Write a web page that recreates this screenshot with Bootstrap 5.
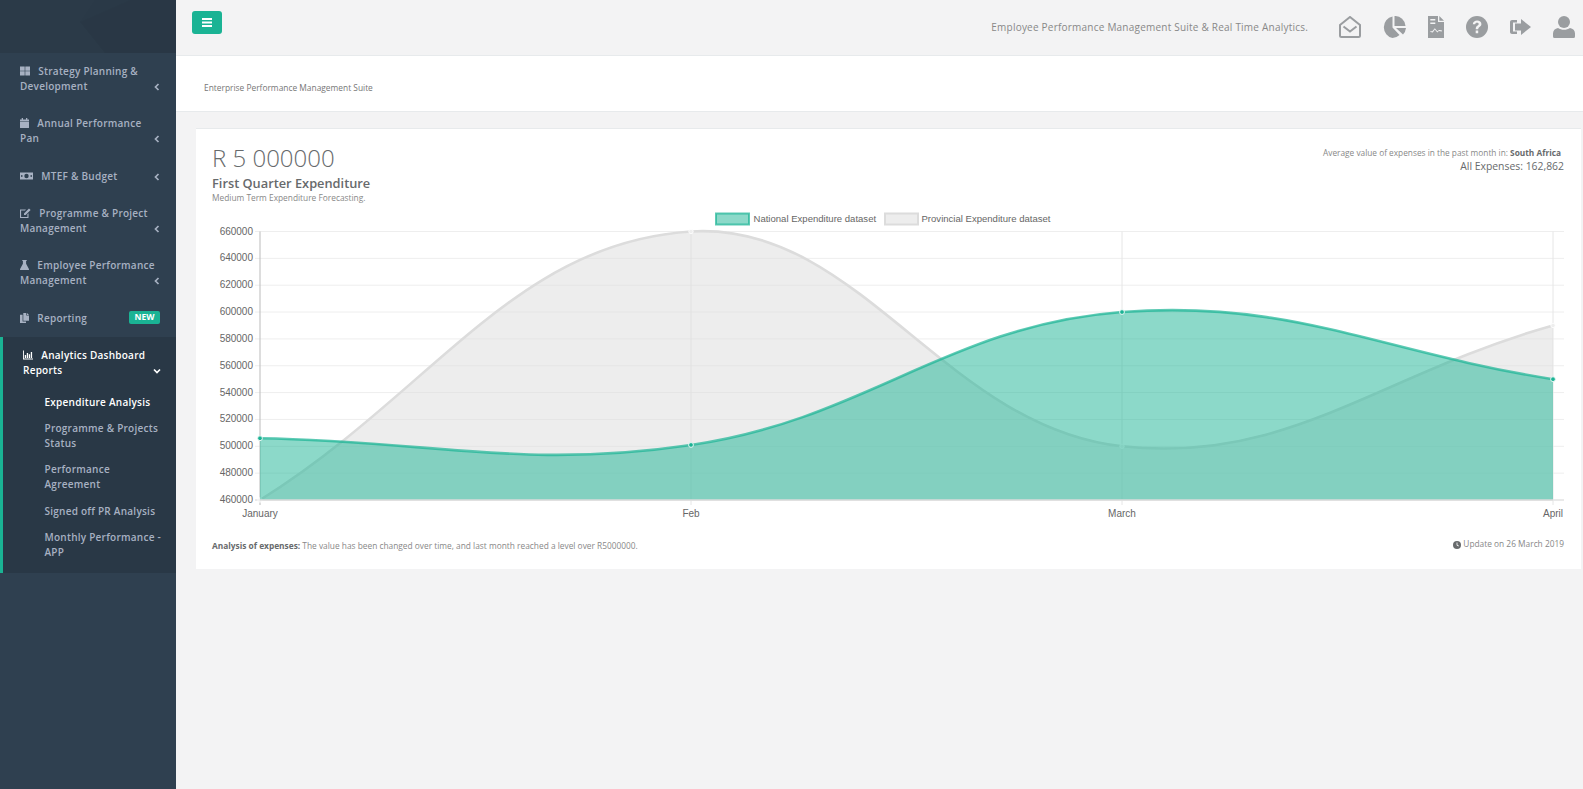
<!DOCTYPE html>
<html lang="en">
<head>
<meta charset="utf-8">
<title>Expenditure Analysis</title>
<link href="https://cdn.jsdelivr.net/npm/bootstrap@5.3.0/dist/css/bootstrap.min.css" rel="stylesheet">
<style>
html,body{height:100%;}
body{font-family:"Open Sans",sans-serif;background:#f3f3f4;color:#676a6c;font-size:13px;overflow:hidden;}
.shell{min-height:789px;}
.side{width:176px;flex:0 0 176px;background:#2f4050;min-height:789px;}
.side-head{height:53px;background:#2a3947;overflow:hidden;}
.side-head svg{display:block;}
.side-menu{list-style:none;margin:0;padding:0;}
.side-link{display:block;position:relative;padding:11px 20px 11px 20px;font-size:10px;font-weight:600;line-height:15px;color:#a7b1c2;text-decoration:none;letter-spacing:.25px;}
.side-link svg.lead-ico{vertical-align:-1px;margin-right:5.5px;fill:#a7b1c2;}
.side-arrow{position:absolute;right:15px;bottom:14.5px;width:8px;height:8px;}
.nudge{margin-top:1px;}
.side-active{background:#293846;border-left:3px solid #1ab394;}
.side-active>.side-link{color:#fff;padding-bottom:12px;}
.side-active>.side-link svg.lead-ico{fill:#fff;}
.side-active>.side-link .side-arrow{bottom:15.5px;}
.sub-menu{list-style:none;margin:0;padding:0 0 6.5px 0;}
.sub-link{display:block;padding:5px 12px 6px 41.5px;font-size:10px;font-weight:600;line-height:15px;color:#a7b1c2;text-decoration:none;letter-spacing:.25px;}
.sub-now{color:#fff;}
.tag-new{position:absolute;right:16px;top:11px;width:31px;height:13px;background:#1ab394;color:#fff;font-size:8.5px;font-weight:700;line-height:12px;text-align:center;border-radius:2px;letter-spacing:0;}
.main-col{min-width:0;}
.top-strip{height:56px;border-bottom:1px solid #e7eaec;padding:11px 8px 0 16px;}
.burger{width:30px;height:23px;background:#1ab394;border:0;border-radius:3px;padding:0;display:flex;align-items:center;justify-content:center;}
.top-msg{font-size:10px;line-height:14px;color:#888;letter-spacing:.22px;margin-right:31px;margin-top:9px;}
.top-icons{gap:22px;margin-top:5px;}
.env-ico{margin-right:-1px;}
.crumb-band{height:56px;background:#fff;border-bottom:1px solid #e7eaec;padding:26px 28px 0 28px;font-size:8.4px;color:#777;line-height:12px;}
.chart-box{margin:16px 2px 0 20px;background:#fff;border-top:1px solid #e7eaec;height:441px;padding:14px 17px 0 16px;position:relative;}
.big-val{font-size:24px;font-weight:300;line-height:30px;color:#676a6c;}
.chart-title{font-size:12.8px;font-weight:600;line-height:18px;margin-top:1px;color:#676a6c;}
.chart-sub{font-size:8.35px;line-height:12px;margin-top:0;color:#888;}
.avg-line{font-size:8.3px;line-height:12px;color:#888;padding-right:3px;margin-top:4px;}
.avg-line b{color:#676a6c;}
.all-line{font-size:10.4px;line-height:14px;color:#676a6c;margin-top:0;}
.plot{position:absolute;left:0;top:0;}
.plot text{font-family:"Liberation Sans",sans-serif;font-size:10px;fill:#666;}
.plot text.legend-txt{font-size:9.55px;}
.foot-row{position:absolute;left:16px;right:17px;top:409px;font-size:8.35px;color:#888;line-height:12px;}
.foot-row b{color:#676a6c;}
.foot-left{padding-top:2px;}
</style>
</head>
<body>
<div class="d-flex shell">
  <nav class="side">
    <div class="side-head"><svg width="176" height="53" viewBox="0 0 176 53"><path d="M0 0h95L80 22 105 53H0z" fill="#fff" opacity=".008"/><path d="M80 22 130 0h46v53h-71z" fill="#000" opacity=".02"/></svg></div>
    <ul class="side-menu">
      <li><a class="side-link" href="#"><svg class="lead-ico" width="10" height="10" viewBox="0 0 10 10"><path d="M0 .5h4.700v4.200H0zM5.300.5H10v4.200H5.300zM0 5.300h4.700v4.200H0zM5.300 5.300H10v4.200H5.300z"/></svg> Strategy Planning &amp; Development<svg class="side-arrow" viewBox="0 0 8 8"><path d="M5.500 1 2.500 4l3 3" fill="none" stroke="#a7b1c2" stroke-width="1.700"/></svg></a></li>
      <li><a class="side-link" href="#"><svg class="lead-ico" width="9" height="10" viewBox="0 0 9 10"><path d="M0 3.600h9v5.900a.5.5 0 0 1-.5.5H.5a.5.5 0 0 1-.5-.5zM0 1.500h1.700V0h1.300v1.500h3V0h1.300v1.500H9v1.500H0z"/></svg> Annual Performance Pan<svg class="side-arrow" viewBox="0 0 8 8"><path d="M5.500 1 2.500 4l3 3" fill="none" stroke="#a7b1c2" stroke-width="1.700"/></svg></a></li>
      <li class="nudge"><a class="side-link" href="#"><svg class="lead-ico" width="13" height="10" viewBox="0 0 13 10"><path fill-rule="evenodd" d="M0 1.500h13v7H0zM6.500 2.800a2.200 2.200 0 1 0 0 4.400 2.200 2.200 0 0 0 0-4.400zM1.200 4v2h1.200V4zM10.600 4v2h1.200V4z"/></svg> MTEF &amp; Budget<svg class="side-arrow" viewBox="0 0 8 8"><path d="M5.500 1 2.500 4l3 3" fill="none" stroke="#a7b1c2" stroke-width="1.700"/></svg></a></li>
      <li><a class="side-link" href="#"><svg class="lead-ico" width="11" height="10" viewBox="0 0 11 10"><path d="M0 1.500h6L5 2.600H1.100v6.300h6.300V6.300L8.500 5.200V10H0zM4 5.500 9 .5l1.600 1.600-5 5H4z"/></svg> Programme &amp; Project Management<svg class="side-arrow" viewBox="0 0 8 8"><path d="M5.500 1 2.500 4l3 3" fill="none" stroke="#a7b1c2" stroke-width="1.700"/></svg></a></li>
      <li><a class="side-link" href="#"><svg class="lead-ico" width="9" height="10" viewBox="0 0 9 10"><path d="M2.300 0h4.400v.9h-.6v2.900l2.800 5.200a.7.7 0 0 1-.6 1H.7a.7.7 0 0 1-.6-1l2.800-5.200V.9h-.6z"/></svg> Employee Performance Management<svg class="side-arrow" viewBox="0 0 8 8"><path d="M5.500 1 2.500 4l3 3" fill="none" stroke="#a7b1c2" stroke-width="1.700"/></svg></a></li>
      <li class="nudge"><a class="side-link" href="#"><svg class="lead-ico" width="9" height="10" viewBox="0 0 9 10"><path d="M3.300 0h3v2.500H9v5.300H3.300zM7 0l2 1.900H7zM0 1.800h2.600v6.700h3.400V10H0z"/></svg> Reporting<span class="tag-new">NEW</span></a></li>
      <li class="side-active">
        <a class="side-link" href="#"><svg class="lead-ico" width="10" height="10" viewBox="0 0 10 10"><path d="M0 .5h.9v8H10v1H0zM1.800 5h1.300v3H1.800zM3.800 3h1.300v5H3.800zM5.800 4.200h1.300V8H5.800zM7.800 2h1.300v6H7.800z"/></svg> Analytics Dashboard Reports<svg class="side-arrow" viewBox="0 0 8 8"><path d="M1 2.500 4 5.500l3-3" fill="none" stroke="#fff" stroke-width="1.700"/></svg></a>
        <ul class="sub-menu">
          <li><a class="sub-link sub-now" href="#">Expenditure Analysis</a></li>
          <li><a class="sub-link" href="#">Programme &amp; Projects Status</a></li>
          <li><a class="sub-link" href="#">Performance Agreement</a></li>
          <li class="nudge"><a class="sub-link" href="#">Signed off PR Analysis</a></li>
          <li><a class="sub-link" href="#">Monthly Performance - APP</a></li>
        </ul>
      </li>
    </ul>
  </nav>
  <div class="flex-grow-1 main-col">
    <header class="top-strip d-flex justify-content-between align-items-start">
      <button class="burger" type="button" aria-label="Menu"><svg width="10" height="9" viewBox="0 0 10 9"><path d="M0 0h10v2H0zM0 3.500h10v2H0zM0 7h10v2H0z" fill="#fff"/></svg></button>
      <div class="d-flex align-items-start">
        <span class="top-msg">Employee Performance Management Suite &amp; Real Time Analytics.</span>
        <div class="d-flex top-icons">
          <svg class="env-ico" width="22" height="22" viewBox="0 0 22 22"><path d="M1 9 11 1l10 8v10.500a1.500 1.500 0 0 1-1.500 1.500h-17A1.500 1.500 0 0 1 1 19.500z" fill="none" stroke="#9a9da0" stroke-width="2"/><path d="M4.500 10.500l6.500 5 6.500-5" fill="none" stroke="#9a9da0" stroke-width="2"/></svg>
          <svg width="24" height="22" viewBox="0 0 24 22" fill="#9a9da0"><path d="M10.500.5v11l7 7.500a10.500 10.500 0 0 1-7 3A11 11 0 0 1 10.500.5z"/><path d="M12.500 0A10.500 10.500 0 0 1 23.500 10H12.500z"/><path d="M14 12h10a11 11 0 0 1-3 6.500z"/></svg>
          <svg width="16" height="22" viewBox="0 0 16 22" fill="#9a9da0"><path fill-rule="evenodd" d="M0 0h10v6h6v16H0zM11.300 0 16 4.700h-4.700zM2.300 3v1.500h5V3zM2.300 6.500V8h5V6.500zM2.300 16l2.500.5 2-3 2.500 3 1.500-1.500 3 .5v-1.200l-2.700-.4-1.800 1.300-2.500-3-2.500 3H2.300z"/></svg>
          <svg width="22" height="22" viewBox="0 0 22 22"><circle cx="11" cy="11" r="11" fill="#9a9da0"/><path d="M6.800 8.200C7 5.800 8.900 4.500 11.100 4.500c2.500 0 4.300 1.400 4.300 3.500 0 2.900-3.200 2.900-3.200 5.200H9.700c0-3.500 3-3.500 3-5.100 0-.9-.7-1.400-1.700-1.400-1.100 0-1.700.7-1.900 1.500zM9.700 14.500h2.500v2.800H9.700z" fill="#f3f3f4"/></svg>
          <svg width="21" height="22" viewBox="0 0 21 22" fill="#9a9da0"><path d="M0 6c0-1.300 1-2 2-2h5v2.500H3v9h4V18H2c-1 0-2-.8-2-2zM11 3l10 8-10 8v-4.500H5v-7h6z"/></svg>
          <svg width="22" height="22" viewBox="0 0 22 22" fill="#9a9da0"><circle cx="11" cy="6" r="6"/><path d="M5 12c1.700 1.200 3.800 1.800 6 1.800s4.300-.6 6-1.800c3 .5 5 2.500 5 5.500v3a1.500 1.500 0 0 1-1.500 1.500h-19A1.500 1.500 0 0 1 0 20.500v-3c0-3 2-5 5-5.500z"/></svg>
        </div>
      </div>
    </header>
    <div class="crumb-band">Enterprise Performance Management Suite</div>
    <section class="chart-box">
      <svg class="plot" id="plot" width="1385" height="441" viewBox="196 129 1385 441" aria-label="Expenditure line chart"></svg>
      <div class="d-flex justify-content-between position-relative">
        <div>
          <div class="big-val">R 5 000000</div>
          <div class="chart-title">First Quarter Expenditure</div>
          <div class="chart-sub">Medium Term Expenditure Forecasting.</div>
        </div>
        <div class="text-end">
          <div class="avg-line">Average value of expenses in the past month in: <b>South Africa</b></div>
          <div class="all-line">All Expenses: 162,862</div>
        </div>
      </div>
      <div class="foot-row d-flex justify-content-between">
        <div class="foot-left"><b>Analysis of expenses:</b> The value has been changed over time, and last month reached a level over R5000000.</div>
        <div><svg width="8" height="8" viewBox="0 0 8 8"><circle cx="4" cy="4" r="4" fill="#676a6c"/><path d="M3.600 1.500h.8v2.300l1.500 1-.5.600L3.600 4.200z" fill="#fff"/></svg> Update on 26 March 2019</div>
      </div>
    </section>
  </div>
</div>
<script>
(function(){
  var svg=document.getElementById('plot'),NS='http://www.w3.org/2000/svg';
  var xs=[260,691,1122,1553],top=231.5,bot=500;
  function Y(v){return bot-(v-460000)/200000*(bot-top);}
  function add(n,a,t){var e=document.createElementNS(NS,n);for(var k in a)e.setAttribute(k,a[k]);if(t)e.textContent=t;svg.appendChild(e);return e;}
  for(var i=0;i<=10;i++){var v=460000+i*20000,y=Y(v);
    add('line',{x1:255,x2:1564,y1:y,y2:y,stroke:i==0?'#d4d4d4':'#eeeeee','stroke-width':1});
    add('text',{x:253,y:y+3,'text-anchor':'end'},String(v));}
  xs.forEach(function(x,i){add('line',{x1:x,x2:x,y1:top,y2:505,stroke:i==0?'#bbb':'#e6e6e6','stroke-width':1});});
  ['January','Feb','March','April'].forEach(function(t,i){add('text',{x:xs[i],y:517,'text-anchor':'middle'},t);});
  function path(data){
    var p=data.map(function(v,i){return [xs[i],Y(v)];}),t=0.4,c=[];
    p.forEach(function(c0,i){
      var a=p[i-1]||c0,b=p[i+1]||c0;
      var d1=Math.hypot(c0[0]-a[0],c0[1]-a[1]),d2=Math.hypot(b[0]-c0[0],b[1]-c0[1]);
      var s=d1+d2||1,fa=t*d1/s,fb=t*d2/s;
      c.push([[c0[0]-fa*(b[0]-a[0]),c0[1]-fa*(b[1]-a[1])],[c0[0]+fb*(b[0]-a[0]),c0[1]+fb*(b[1]-a[1])]]);
    });
    var d='M'+p[0];
    for(var i=1;i<p.length;i++)d+=' C'+c[i-1][1]+' '+c[i][0]+' '+p[i];
    return {d:d,p:p};
  }
  var b=path([460000,660000,500000,590000]),a=path([506000,501000,600000,550000]);
  add('path',{d:b.d+' L1553 '+bot+' L260 '+bot+'Z',fill:'rgba(220,220,220,.5)'});
  add('path',{d:b.d,fill:'none',stroke:'rgba(220,220,220,1)','stroke-width':2.6});
  b.p.forEach(function(q){add('circle',{cx:q[0],cy:q[1],r:2.2,fill:'#eeeeee',stroke:'#fff','stroke-width':.8});});
  add('path',{d:a.d+' L1553 '+bot+' L260 '+bot+'Z',fill:'rgba(26,179,148,.5)'});
  add('path',{d:a.d,fill:'none',stroke:'rgba(26,179,148,.7)','stroke-width':2.6});
  add('line',{x1:260,x2:1553,y1:bot,y2:bot,stroke:'#dcdcdc','stroke-width':1.6});
  a.p.forEach(function(q){add('circle',{cx:q[0],cy:q[1],r:2.4,fill:'#1ab394',stroke:'#e8f7f4','stroke-width':1});});
  add('rect',{x:716,y:213.5,width:33,height:11,fill:'rgba(26,179,148,.5)',stroke:'rgba(26,179,148,.7)','stroke-width':2});
  add('text',{x:753.5,y:222,'class':'legend-txt'},'National Expenditure dataset');
  add('rect',{x:885,y:213.5,width:33,height:11,fill:'rgba(220,220,220,.5)',stroke:'#dcdcdc','stroke-width':2});
  add('text',{x:921.5,y:222,'class':'legend-txt'},'Provincial Expenditure dataset');
})();
</script>
<script src="https://cdn.jsdelivr.net/npm/bootstrap@5.3.0/dist/js/bootstrap.bundle.min.js"></script>
</body>
</html>
